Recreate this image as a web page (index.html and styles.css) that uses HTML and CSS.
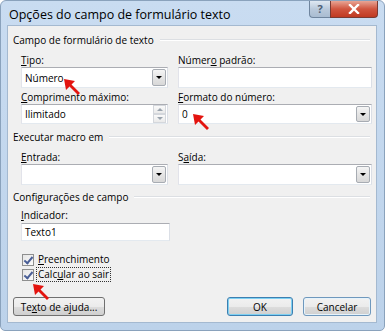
FILE: index.html
```html
<!DOCTYPE html>
<html>
<head>
  <title>Opções do campo de formulário texto</title>
  <meta charset="UTF-8">
  <link rel="stylesheet" href="styles.css">
</head>
<body>

<div class="window">
  <div class="titlebar">
    <span class="title">Opções do campo de formulário texto</span>
    <div class="caption-btns">
      <span class="cap-help">?</span>
      <span class="cap-close">
        <svg width="12" height="10" viewBox="0 0 12 10">
          <path d="M2 1 L10 9 M10 1 L2 9" stroke="#fff" stroke-width="2.4" stroke-linecap="square"/>
        </svg>
      </span>
    </div>
  </div>

  <div class="client">

    <div class="group-title"><span>Campo de formulário de texto</span></div>

    <div class="pair first">
      <div class="field">
        <label><u>T</u>ipo:</label>
        <div class="combo tall"><span class="value">Número</span><span class="drop"></span></div>
      </div>
      <div class="field">
        <label>Númer<u>o</u> padrão:</label>
        <div class="textbox tall"></div>
      </div>
    </div>

    <div class="pair second">
      <div class="field">
        <label><u>C</u>omprimento máximo:</label>
        <div class="spinbox"><span class="value">Ilimitado</span>
          <span class="spin"><span class="up"></span><span class="down"></span></span>
        </div>
      </div>
      <div class="field">
        <label><u>F</u>ormato do número:</label>
        <div class="combo"><span class="value">0</span><span class="drop"></span></div>
      </div>
    </div>

    <div class="group-title gap"><span>Executar macro em</span></div>

    <div class="pair first">
      <div class="field">
        <label><u>E</u>ntrada:</label>
        <div class="combo tall"><span class="value"></span><span class="drop"></span></div>
      </div>
      <div class="field">
        <label>S<u>a</u>ída:</label>
        <div class="combo tall"><span class="value"></span><span class="drop"></span></div>
      </div>
    </div>

    <div class="group-title gap-small"><span>Configurações de campo</span></div>

    <div class="indicator">
      <label><u>I</u>ndicador:</label>
      <div class="textbox short"><span class="value">Texto1</span></div>
    </div>

    <div class="checks">
      <div class="check-row"><span class="checkbox"></span><span class="check-label"><u>P</u>reenchimento</span></div>
      <div class="check-row"><span class="checkbox"></span><span class="check-label focus">Calc<u>u</u>lar ao sair</span></div>
    </div>

    <div class="buttons">
      <button class="btn help">Te<u>x</u>to de ajuda...</button>
      <div class="right-buttons">
        <button class="btn default">OK</button>
        <button class="btn cancel">Cancelar</button>
      </div>
    </div>

    <!-- setas de anotação -->
    <svg class="arrow a1" width="18" height="18" viewBox="0 0 18 18"><path d="M1 1 L12 3 L8.5 6.5 L17 15 L15 17 L6.5 8.5 L3 12 Z" fill="#e3140f"/></svg>
    <svg class="arrow a2" width="18" height="18" viewBox="0 0 18 18"><path d="M1 1 L12 3 L8.5 6.5 L17 15 L15 17 L6.5 8.5 L3 12 Z" fill="#e3140f"/></svg>
    <svg class="arrow a3" width="18" height="18" viewBox="0 0 18 18"><path d="M1 1 L12 3 L8.5 6.5 L17 15 L15 17 L6.5 8.5 L3 12 Z" fill="#e3140f"/></svg>
  </div>
</div>

</body>
</html>
```

FILE: styles.css
```css
body {
  margin: 0;
  background: #ffffff;
  font-family: "Open Sans", "Noto Sans", sans-serif;
  font-size: 10px;
  color: #000;
}

.window {
  width: 385px;
  height: 331px;
  box-sizing: border-box;
  border: 1px solid #8aa2bc;
  border-radius: 6px 6px 5px 5px;
  background: linear-gradient(#c9dcf1, #bcd2ea);
  display: flex;
  flex-direction: column;
}

.titlebar {
  height: 24px;
  display: flex;
  align-items: flex-start;
  padding-left: 8px;
}

.title {
  font-size: 12.5px;
  line-height: 28px;
  color: #000;
}

.caption-btns {
  margin-left: auto;
  margin-right: 6px;
  display: flex;
}

.cap-help {
  width: 20px;
  height: 16px;
  border: 1px solid #6f859e;
  border-top: none;
  border-right: none;
  border-radius: 0 0 0 4px;
  background: linear-gradient(#dfe8f2, #b9c9db 50%, #a9bcd1);
  color: #4d5f74;
  font-size: 11px;
  line-height: 16px;
  text-align: center;
  font-weight: bold;
}

.cap-close {
  width: 46px;
  height: 16px;
  border: 1px solid #7a3a32;
  border-top: none;
  border-radius: 0 0 4px 0;
  background: linear-gradient(#e8a595, #d0553f 50%, #c03a22);
  display: flex;
  justify-content: center;
  align-items: center;
}

.client {
  position: relative;
  margin: 0 7px 7px 6px;
  flex: 1;
  border: 1px solid #a4b9d0;
  background: #f0f0f0;
  padding: 6px 5px 0 5px;
}

.group-title {
  height: 16px;
  display: flex;
  align-items: center;
  padding-right: 1px;
}

.group-title::after {
  content: "";
  flex: 1;
  height: 1px;
  margin-left: 6px;
  background: #dcdfe3;
  border-bottom: 1px solid #fff;
}

.group-title.gap {
  margin-top: 5px;
}

.group-title.gap-small {
  margin-top: 4px;
}

.pair {
  display: grid;
  grid-template-columns: 147px 194px;
  column-gap: 10px;
  margin-left: 8px;
}

.pair.first {
  margin-top: 5px;
}

.pair.second {
  margin-top: 2px;
}

label {
  display: block;
  height: 14px;
  line-height: 14px;
}

.combo, .textbox, .spinbox {
  box-sizing: border-box;
  height: 20px;
  background: #fff;
  border: 1px solid #abadb3;
  border-color: #abadb3 #dbdfe6 #e3e9ef #e2e3ea;
  display: flex;
  align-items: center;
}

.tall {
  height: 21px;
}

.value {
  flex: 1;
  padding-left: 3px;
}

.drop {
  box-sizing: border-box;
  width: 14px;
  height: calc(100% - 2px);
  margin-right: 1px;
  border: 1px solid #a7acb3;
  border-radius: 2px;
  background: linear-gradient(#f5f5f5, #e5e5e5 50%, #d8d8d8);
  position: relative;
}

.drop::after {
  content: "";
  position: absolute;
  left: 3px;
  top: 6px;
  border-left: 3px solid transparent;
  border-right: 3px solid transparent;
  border-top: 3px solid #000;
}

.spin {
  width: 13px;
  height: 100%;
  display: flex;
  flex-direction: column;
  margin-right: 1px;
}

.spin span {
  flex: 1;
  border: 1px solid #d4d7dc;
  background: linear-gradient(#fafafa, #eaeaea);
  position: relative;
}

.spin .up::after, .spin .down::after {
  content: "";
  position: absolute;
  left: 3px;
  top: 2px;
  border-left: 3px solid transparent;
  border-right: 3px solid transparent;
}

.spin .up::after {
  border-bottom: 3px solid #9aa3ad;
}

.spin .down::after {
  border-top: 3px solid #9aa3ad;
}

.indicator {
  margin: 3px 0 0 8px;
  width: 149px;
}

.textbox.short {
  height: 18px;
  margin-top: 1px;
}

.checks {
  margin: 11px 0 0 9px;
}

.check-row {
  height: 15px;
  display: flex;
  align-items: center;
}

.checkbox {
  box-sizing: border-box;
  width: 12px;
  height: 12px;
  border: 1px solid #8e8f8f;
  background: linear-gradient(135deg, #e6e6e6, #fbfbfb);
  margin-right: 3px;
  position: relative;
}

.checkbox::after {
  content: "";
  position: absolute;
  left: 3px;
  top: 0px;
  width: 3px;
  height: 7px;
  border-right: 2px solid #4a5f97;
  border-bottom: 2px solid #4a5f97;
  transform: rotate(40deg);
}

.check-label {
  line-height: 13px;
  padding: 0 1px;
}

.check-label.focus {
  outline: 1px dotted #333;
}

.buttons {
  display: flex;
  margin-top: 15px;
}

.btn {
  font-family: "Open Sans", "Noto Sans", sans-serif;
  font-size: 10px;
  height: 19px;
  padding: 0;
  border: 1px solid #707070;
  border-radius: 3px;
  background: linear-gradient(#f2f2f2, #ebebeb 50%, #dddddd 51%, #cfcfcf);
  color: #000;
}

.btn.help {
  width: 92px;
}

.right-buttons {
  margin-left: auto;
  display: flex;
  gap: 10px;
}

.btn.default {
  width: 66px;
  border-color: #3c7fb1;
  box-shadow: inset 0 0 0 1px #7ed0f2;
}

.btn.cancel {
  width: 68px;
  border-color: #6f98bd;
  box-shadow: inset 0 0 0 1px #e6f3fb;
}

.arrow {
  position: absolute;
}

.arrow.a1 {
  left: 55px;
  top: 52px;
}

.arrow.a2 {
  left: 184px;
  top: 87px;
}

.arrow.a3 {
  left: 24px;
  top: 257px;
}
```
